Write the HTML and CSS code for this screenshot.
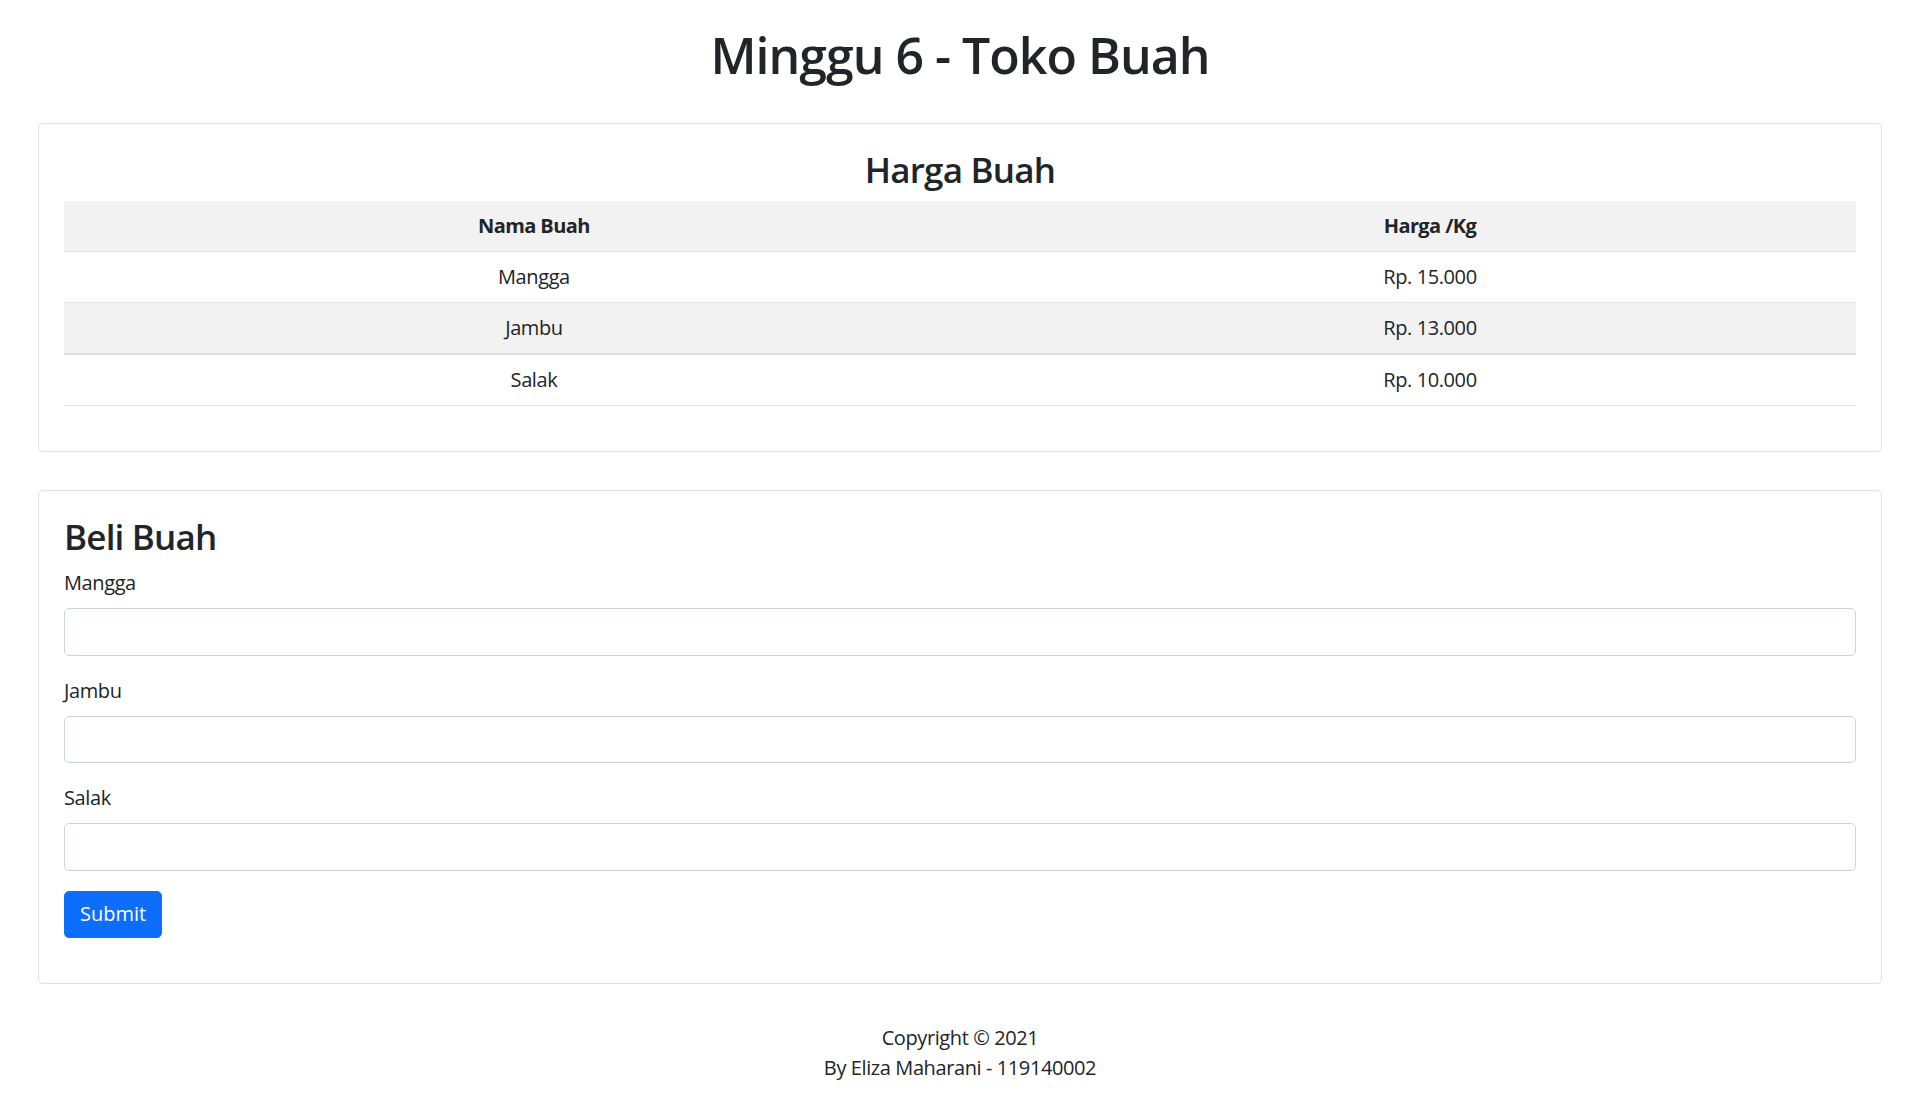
FILE: index.html
```html
<!DOCTYPE html>
<html lang="id">
<head>
<meta charset="utf-8">
<title>Minggu 6 - Toko Buah</title>
<link rel="stylesheet" href="styles.css">
</head>
<body>
<div class="page">
  <h1 class="page-title">Minggu 6 - Toko Buah</h1>

  <section class="card">
    <h3 class="card-heading center">Harga Buah</h3>
    <table class="price-table">
      <tbody>
        <tr class="striped">
          <th class="col-name">Nama Buah</th>
          <th class="col-price">Harga /Kg</th>
        </tr>
        <tr>
          <td>Mangga</td>
          <td>Rp. 15.000</td>
        </tr>
        <tr class="striped thick">
          <td>Jambu</td>
          <td>Rp. 13.000</td>
        </tr>
        <tr>
          <td>Salak</td>
          <td>Rp. 10.000</td>
        </tr>
      </tbody>
    </table>
  </section>

  <section class="card">
    <h3 class="card-heading">Beli Buah</h3>
    <form class="buy-form" onsubmit="return false;">
      <div class="field">
        <label class="field-label" for="mangga">Mangga</label>
        <input class="field-input" type="text" id="mangga">
      </div>
      <div class="field">
        <label class="field-label" for="jambu">Jambu</label>
        <input class="field-input" type="text" id="jambu">
      </div>
      <div class="field">
        <label class="field-label" for="salak">Salak</label>
        <input class="field-input" type="text" id="salak">
      </div>
      <div class="actions">
        <button class="btn-submit" type="submit">Submit</button>
      </div>
    </form>
  </section>

  <footer class="footer">
    <div>Copyright © 2021</div>
    <div>By Eliza Maharani - 119140002</div>
  </footer>
</div>
</body>
</html>
```

FILE: styles.css
```css
* {
  box-sizing: border-box;
}

html, body {
  margin: 0;
  padding: 0;
  background: #fff;
}

body {
  font-family: "Open Sans", "Noto Sans", "DejaVu Sans", sans-serif;
  font-size: 20px;
  line-height: 30px;
  color: #212529;
  letter-spacing: -0.4px;
}

.page {
  padding: 25px 38px 0;
  display: flex;
  flex-direction: column;
}

.page-title {
  margin: 0 0 38px;
  font-size: 50px;
  line-height: 60px;
  font-weight: 600;
  text-align: center;
  letter-spacing: -1px;
}

.card {
  border: 1px solid rgba(0, 0, 0, 0.125);
  border-radius: 5px;
  padding: 25px;
  margin-bottom: 38px;
  display: flex;
  flex-direction: column;
}

.card-heading {
  margin: 0 0 10px;
  font-size: 35px;
  line-height: 42px;
  font-weight: 600;
  letter-spacing: -0.8px;
}

.center {
  text-align: center;
}

.price-table {
  width: 100%;
  border-collapse: collapse;
  margin-bottom: 20px;
}

.price-table th,
.price-table td {
  padding: 10px 10px;
  line-height: 30px;
  text-align: center;
  border-bottom: 1px solid #e2e3e5;
}

.price-table th {
  font-weight: 700;
  letter-spacing: -0.6px;
}

.col-name {
  width: 52.45%;
}

.price-table tr.striped th,
.price-table tr.striped td {
  background: #f2f2f2;
}

.price-table tr.thick td {
  border-bottom: 2px solid #dde1e6;
}

.buy-form {
  display: flex;
  flex-direction: column;
}

.field {
  display: flex;
  flex-direction: column;
  margin-bottom: 20px;
}

.field-label {
  margin-bottom: 10px;
  line-height: 30px;
}

.field-input {
  height: 47.5px;
  border: 1px solid #ced4da;
  border-radius: 5px;
  padding: 0 15px;
  font: inherit;
  color: #212529;
  background: #fff;
}

.actions {
  margin-bottom: 20px;
}

.btn-submit {
  height: 47.5px;
  padding: 0 15px;
  border: 1px solid #0d6efd;
  border-radius: 5px;
  background: #0d6efd;
  color: #fff;
  font: inherit;
  line-height: 30px;
  cursor: pointer;
}

.footer {
  margin-top: 1px;
  text-align: center;
  line-height: 30px;
}
```
